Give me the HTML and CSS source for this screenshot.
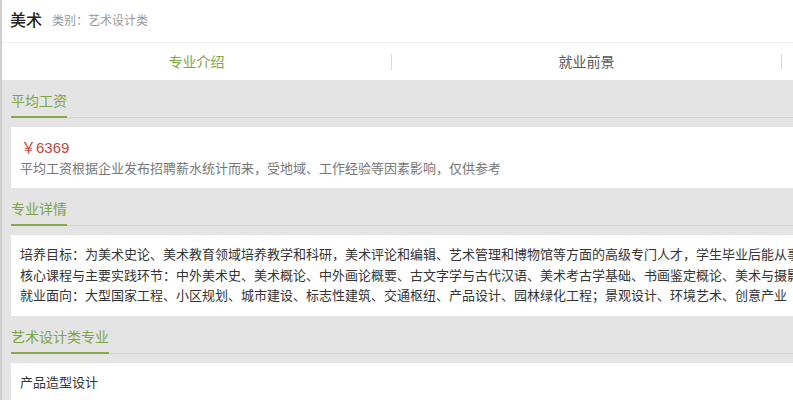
FILE: index.html
```html
<!DOCTYPE html>
<html lang="zh-CN">
<head>
<meta charset="utf-8">
<title>美术</title>
<link rel="stylesheet" href="styles.css">
</head>
<body>
<div class="page">
  <header class="header">
    <h1 class="name">美术</h1>
    <span class="category">类别：艺术设计类</span>
  </header>
  <nav class="tabs">
    <div class="tab active">专业介绍</div>
    <div class="tab-sep"></div>
    <div class="tab">就业前景</div>
    <div class="tab-sep"></div>
  </nav>
  <main class="content">
    <section class="section">
      <div class="section-head"><h2 class="section-title">平均工资</h2></div>
      <div class="card salary-card">
        <div class="price">￥6369</div>
        <div class="note">平均工资根据企业发布招聘薪水统计而来，受地域、工作经验等因素影响，仅供参考</div>
      </div>
    </section>
    <section class="section">
      <div class="section-head"><h2 class="section-title">专业详情</h2></div>
      <div class="card detail-card">
        <p class="line">培养目标：为美术史论、美术教育领域培养教学和科研，美术评论和编辑、艺术管理和博物馆等方面的高级专门人才，学生毕业后能从事</p>
        <p class="line">核心课程与主要实践环节：中外美术史、美术概论、中外画论概要、古文字学与古代汉语、美术考古学基础、书画鉴定概论、美术与摄影</p>
        <p class="line">就业面向：大型国家工程、小区规划、城市建设、标志性建筑、交通枢纽、产品设计、园林绿化工程；景观设计、环境艺术、创意产业</p>
      </div>
    </section>
    <section class="section">
      <div class="section-head"><h2 class="section-title">艺术设计类专业</h2></div>
      <div class="card list-card">
        <div class="item">产品造型设计</div>
      </div>
    </section>
  </main>
</div>
</body>
</html>
```
FILE: styles.css
```css
html, body {
  margin: 0;
  padding: 0;
  height: 100%;
}
body {
  font-family: "Liberation Sans", "Noto Sans CJK SC", sans-serif;
  background: #e4e4e4;
  color: #333;
  overflow: hidden;
}
.page {
  border-left: 2px solid #cfcfcf;
  min-height: 100%;
  background: #e4e4e4;
}
.header {
  height: 42px;
  background: #fff;
  display: flex;
  align-items: center;
  padding-left: 8px;
  border-bottom: 1px solid #efefef;
}
.name {
  margin: 0;
  font-size: 16px;
  font-weight: 500;
  color: #222;
  line-height: 20px;
}
.category {
  margin-left: 10px;
  font-size: 12px;
  color: #999;
  line-height: 20px;
}
.tabs {
  height: 37px;
  background: #fff;
  display: grid;
  grid-template-columns: 1fr 1px 1fr 1px;
  align-items: center;
  padding-right: 11px;
}
.tab {
  text-align: center;
  font-size: 14px;
  color: #555;
  line-height: 20px;
}
.tab.active {
  color: #7ea53f;
}
.tab-sep {
  height: 16px;
  background: #d8d8d8;
}
.content {
  padding-left: 9px;
}
.section-head {
  border-bottom: 1px solid #d4d4d4;
  padding-top: 11px;
}
.section-title {
  display: inline-block;
  margin: 0 0 -1px 0;
  font-size: 14px;
  font-weight: normal;
  color: #7ea53f;
  line-height: 20px;
  padding-bottom: 5px;
  border-bottom: 2px solid #86a94c;
}
.card {
  background: #fff;
  margin-top: 9px;
  padding: 10px 0 9px 9px;
  white-space: nowrap;
  overflow: hidden;
}
.price {
  font-size: 15px;
  line-height: 22px;
  color: #c4463c;
  padding-left: 1px;
}
.note {
  font-size: 13px;
  line-height: 20px;
  color: #777;
}
.line {
  margin: 0;
  font-size: 13px;
  line-height: 20.5px;
  color: #333;
}
.item {
  font-size: 13px;
  line-height: 20px;
  color: #333;
}
```
